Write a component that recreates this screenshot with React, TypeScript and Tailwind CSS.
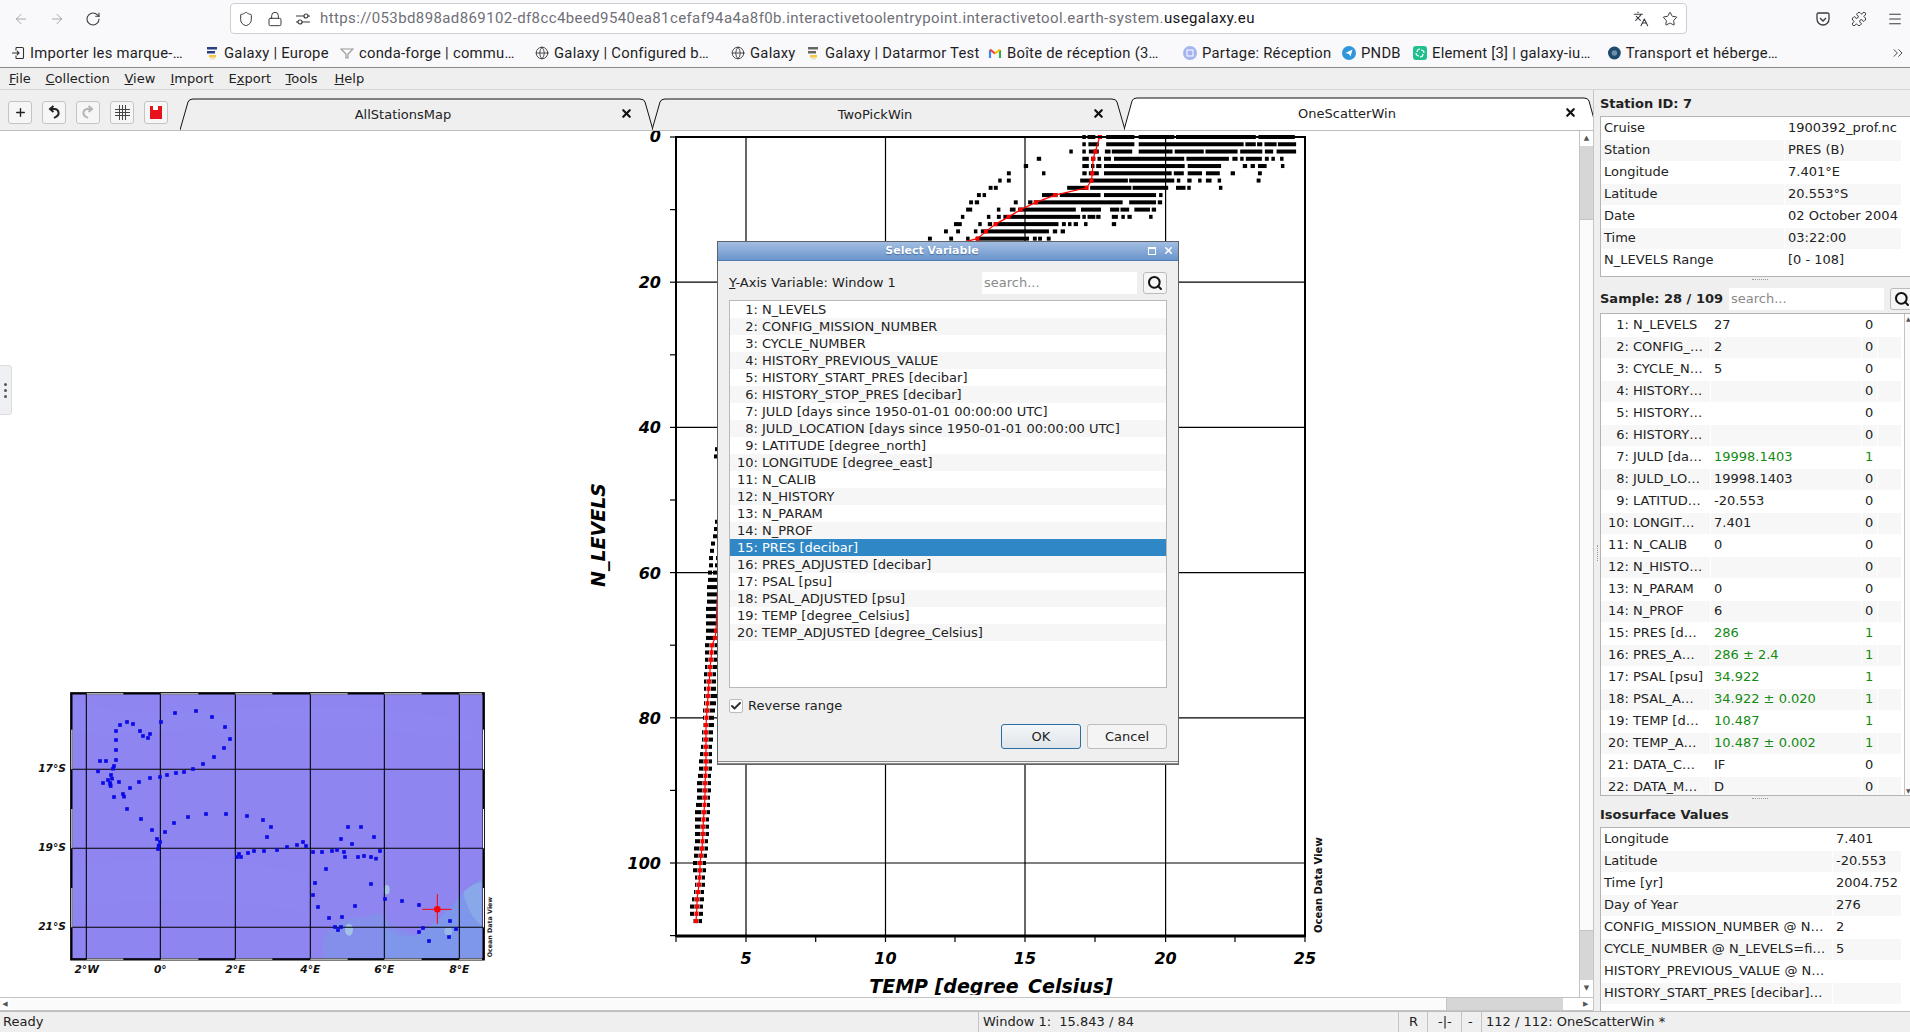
import {
  ArrowLeft,
  ArrowRight,
  RotateCw,
  Shield,
  Lock,
  Languages,
  Star,
  Puzzle,
  Menu,
  ChevronsRight,
  Globe,
  Search,
  Plus,
  X,
  Check,
} from "lucide-react"

const QT = "font-['DejaVu_Sans',sans-serif]"
const URL_TEXT = "https://053bd898ad869102-df8cc4beed9540ea81cefaf94a4a8f0b.interactivetoolentrypoint.interactivetool.earth-system."

function Tune() {
  return (
    <svg width="16" height="16" viewBox="0 0 16 16" fill="none" stroke="#3a3a40" strokeWidth="1.2">
      <path d="M1 5h8M13 5h2M1 11h2M7 11h8" />
      <circle cx="11" cy="5" r="2" />
      <circle cx="5" cy="11" r="2" />
    </svg>
  )
}

function ImportIcon() {
  return (
    <svg width="14" height="14" viewBox="0 0 14 14" fill="none" stroke="#333" strokeWidth="1.1">
      <path d="M5 1.5h6.5a1 1 0 0 1 1 1v9a1 1 0 0 1-1 1H5M5 1.5v3M5 12.5v-3M1 7h7M6 5l2 2-2 2" />
    </svg>
  )
}

function GalaxyIcon({ top = "#2c3e85", low = "#f5c542" }: { top?: string; low?: string }) {
  return (
    <svg width="14" height="14" viewBox="0 0 14 14">
      <rect x="2" y="1" width="10" height="2.5" fill={top} />
      <rect x="2" y="5" width="8" height="2.5" fill={top} />
      <rect x="4" y="9" width="7" height="2.5" fill={low} />
      <rect x="5" y="12" width="5" height="1.5" fill="#e6e6c0" />
    </svg>
  )
}

function CondaIcon() {
  return (
    <svg width="14" height="14" viewBox="0 0 14 14" fill="none" stroke="#9a9a9a" strokeWidth="1.2">
      <path d="M1 3h12L8 8v4H6V8z" />
    </svg>
  )
}

function GmailIcon() {
  return (
    <svg width="14" height="14" viewBox="0 0 14 14" fill="none" strokeWidth="2.2">
      <path d="M2 12V4" stroke="#4285f4" />
      <path d="M12 12V4" stroke="#34a853" />
      <path d="M2 3.5L7 7.5" stroke="#ea4335" />
      <path d="M7 7.5L12 3.5" stroke="#fbbc04" />
    </svg>
  )
}

function PartageIcon() {
  return (
    <svg width="14" height="14" viewBox="0 0 14 14">
      <circle cx="7" cy="7" r="7" fill="#a3b4ee" />
      <rect x="4" y="4" width="6" height="6" fill="none" stroke="#fff" strokeWidth="1" />
    </svg>
  )
}

function PndbIcon() {
  return (
    <svg width="14" height="14" viewBox="0 0 14 14">
      <circle cx="7" cy="7" r="7" fill="#2f96dc" />
      <path d="M3.5 7L10.5 3.5 8.5 10.5 7 8z" fill="#fff" />
    </svg>
  )
}

function ElementIcon() {
  return (
    <svg width="14" height="14" viewBox="0 0 14 14">
      <rect width="14" height="14" rx="3" fill="#1fbf8f" />
      <path d="M4 6a3 3 0 0 1 3-3M10 8a3 3 0 0 1-3 3M8 4a3 3 0 0 1 3 3M6 10a3 3 0 0 1-3-3" stroke="#fff" strokeWidth="1.2" fill="none" />
    </svg>
  )
}

function TransportIcon() {
  return (
    <svg width="14" height="14" viewBox="0 0 14 14">
      <circle cx="7" cy="7" r="7" fill="#1e4a6e" />
      <circle cx="7" cy="7" r="3" fill="#6e8fa8" />
    </svg>
  )
}

const bookmarks = [
  { w: "w-[194px]", icon: <ImportIcon />, label: "Importer les marque-…" },
  { w: "w-[135px]", icon: <GalaxyIcon />, label: "Galaxy | Europe" },
  { w: "w-[195px]", icon: <CondaIcon />, label: "conda-forge | commu…" },
  { w: "w-[196px]", icon: <Globe size={14} strokeWidth={1.3} />, label: "Galaxy | Configured b…" },
  { w: "w-[75px]", icon: <Globe size={14} strokeWidth={1.3} />, label: "Galaxy" },
  { w: "w-[182px]", icon: <GalaxyIcon top="#666" />, label: "Galaxy | Datarmor Test" },
  { w: "w-[195px]", icon: <GmailIcon />, label: "Boîte de réception (3…" },
  { w: "w-[159px]", icon: <PartageIcon />, label: "Partage: Réception" },
  { w: "w-[71px]", icon: <PndbIcon />, label: "PNDB" },
  { w: "w-[195px]", icon: <ElementIcon />, label: "Element [3] | galaxy-iu…" },
  { w: "w-[170px]", icon: <TransportIcon />, label: "Transport et héberge…" },
]

function BrowserChrome() {
  return (
    <div className="font-['Roboto',sans-serif] text-[#1f1e24] border-b border-[#8a8a8a] bg-[#f9f9fb]">
      <div className="h-[38px] flex items-center relative">
        <div className="w-[230px] flex items-center shrink-0 pl-[13px] gap-[20px]">
          <ArrowLeft size={16} strokeWidth={1.5} className="text-[#a8a8ac]" />
          <ArrowRight size={16} strokeWidth={1.5} className="text-[#a8a8ac]" />
          <RotateCw size={16} strokeWidth={1.6} className="text-[#3a3a40]" />
        </div>
        <div className="w-[1457px] h-[31px] mt-[-1px] bg-white border border-[#cfcfd3] rounded-[4px] flex items-center pl-[6px]">
          <Shield size={16} strokeWidth={1.5} className="ml-[1px] text-[#3a3a40]" />
          <Lock size={16} strokeWidth={1.5} className="ml-[13px] text-[#3a3a40]" />
          <span className="ml-[12px]"><Tune /></span>
          <span className="ml-[9px] text-[15px] tracking-[0.39px] whitespace-nowrap text-[#6f6f78]">
            {URL_TEXT}
            <span className="text-[#15141a]">usegalaxy.eu</span>
          </span>
          <span className="flex-1" />
          <Languages size={16} strokeWidth={1.6} className="ml-[-40px] text-[#3a3a40]" />
          <Star size={16} strokeWidth={1.5} className="ml-[13px] mr-[8px] text-[#3a3a40]" />
        </div>
        <div className="flex items-center ml-[128px] gap-[20px] text-[#3a3a40]">
          <svg width="16" height="16" viewBox="0 0 16 16" fill="none" stroke="currentColor" strokeWidth="1.3">
            <path d="M2 3.5a1.5 1.5 0 0 1 1.5-1.5h9A1.5 1.5 0 0 1 14 3.5V8a6 6 0 0 1-12 0zM5 7l3 3 3-3" />
          </svg>
          <Puzzle size={16} strokeWidth={1.5} />
          <Menu size={16} strokeWidth={1.6} />
        </div>
      </div>
      <div className="h-[29px] flex items-center pl-[11px] pt-px text-[14.8px] tracking-[0.25px] whitespace-nowrap">
        {bookmarks.map((b) => (
          <div key={b.label} className={`${b.w} shrink-0 flex items-center gap-[5px]`}>
            {b.icon}
            <span>{b.label}</span>
          </div>
        ))}
        <ChevronsRight size={16} strokeWidth={1.2} className="ml-[112px]" />
      </div>
    </div>
  )
}

function AppMenu() {
  const items = [
    { pre: "", u: "F", post: "ile", w: "w-[36.5px]" },
    { pre: "", u: "C", post: "ollection", w: "w-[79px]" },
    { pre: "", u: "V", post: "iew", w: "w-[46px]" },
    { pre: "", u: "I", post: "mport", w: "w-[58px]" },
    { pre: "E", u: "x", post: "port", w: "w-[57px]" },
    { pre: "", u: "T", post: "ools", w: "w-[49px]" },
    { pre: "", u: "H", post: "elp", w: "w-[40px]" },
  ]
  return (
    <div className="h-[22px] flex items-center pl-[9px] pt-px bg-[#efefef] border-b border-[#d4d4d4] text-[13px] text-[#222]">
      {items.map((m) => (
        <span key={m.post} className={`${m.w} shrink-0`}>
          {m.pre}
          <u>{m.u}</u>
          {m.post}
        </span>
      ))}
    </div>
  )
}

function ToolButton({ children }: { children: React.ReactNode }) {
  return (
    <div className="w-[24px] h-[23px] bg-[#f6f6f6] border border-[#c4c4c4] rounded-[3px] flex items-center justify-center">
      {children}
    </div>
  )
}

function UndoGlyph({ color, flip }: { color: string; flip?: boolean }) {
  return (
    <svg width="14" height="15" viewBox="0 0 14 15" fill="none" stroke={color} strokeWidth="2" className={flip ? "-scale-x-100" : ""}>
      <path d="M4 4h3.5a4 4 0 0 1 2 7.5L7 13" />
      <path d="M6.5 1L3 4l3.5 3" />
    </svg>
  )
}

function TabShape({ active }: { active?: boolean }) {
  return (
    <svg className="absolute inset-0" width="474" height="34" viewBox="0 0 474 34">
      <path
        d={active ? "M0 33 L8 4 Q9 1 13 1 L460 1 Q464 1 465 4 L473 33" : "M0 33 L8 5 Q9 2 13 2 L460 2 Q464 2 465 5 L473 33"}
        fill={active ? "#fff" : "#efefef"}
        stroke="#111"
        strokeWidth="1"
      />
    </svg>
  )
}

function Tab({ label, active }: { label: string; active?: boolean }) {
  return (
    <div className="relative w-[472px] h-[34px] shrink-0">
      <TabShape active={active} />
      <span className={`absolute left-0 right-[26px] text-center text-[13px] text-[#222] ${active ? "top-[7px]" : "top-[8px]"}`}>{label}</span>
      <X size={13} strokeWidth={4} className={`absolute right-[19px] text-[#111] ${active ? "top-[9px]" : "top-[10px]"}`} />
    </div>
  )
}

function TabBar() {
  return (
    <div className="h-[41px] bg-[#efefef] border-b border-[#bdbdbd] flex items-start pt-[7px] pl-[8px]">
      <div className="flex gap-[10px] mt-[4px]">
        <ToolButton>
          <Plus size={13} strokeWidth={2.6} className="text-[#222]" />
        </ToolButton>
        <ToolButton>
          <UndoGlyph color="#222" />
        </ToolButton>
        <ToolButton>
          <UndoGlyph color="#b5b5b5" flip />
        </ToolButton>
        <ToolButton>
          <svg width="15" height="15" viewBox="0 0 15 15" stroke="#444" strokeWidth="1">
            <path d="M4.5 0v15M7.5 0v15M10.5 0v15M0 4.5h15M0 7.5h15M0 10.5h15" />
          </svg>
        </ToolButton>
        <ToolButton>
          <svg width="14" height="15" viewBox="0 0 14 15">
            <path d="M1 1h12v13H1z" fill="#e8121c" />
            <rect x="4" y="1" width="5" height="4" fill="#fff" />
          </svg>
        </ToolButton>
      </div>
      <div className="flex ml-[12px]">
        <Tab label="AllStationsMap" />
        <Tab label="TwoPickWin" />
        <Tab label="OneScatterWin" active />
      </div>
    </div>
  )
}

const dots = [
  [375, 102], [438, 96], [486, 114], [525, 144], [540, 180], [522, 207], [492, 234], [459, 255], [429, 270], [402, 279], [378, 282], [351, 288], [330, 294], [300, 297], [267, 309], [240, 327], [222, 353], [219, 345], [192, 354], [207, 309], [183, 288], [186, 299], [174, 303], [159, 312], [180, 312], [182, 321], [181, 316], [144, 277], [150, 246], [168, 246], [198, 243], [192, 261], [189, 269], [198, 213], [198, 183], [198, 156], [210, 138], [231, 129], [249, 135], [270, 156], [279, 171], [294, 177], [300, 165], [333, 129],
  [231, 390], [273, 420], [306, 453], [321, 480], [330, 489], [326, 500], [324, 510], [345, 459], [372, 432], [414, 414], [468, 405], [528, 405], [591, 411], [639, 423], [663, 444], [651, 474],
  [561, 534], [567, 525], [573, 534], [594, 522], [612, 516], [642, 516], [681, 513], [711, 504], [741, 498], [759, 489], [768, 501], [789, 519], [816, 519], [846, 516], [861, 513], [882, 519], [885, 534], [873, 480], [894, 444], [906, 495], [933, 444], [972, 474], [990, 516], [978, 539], [963, 534], [942, 531], [924, 534],
  [828, 570], [795, 612], [789, 648], [804, 684], [837, 717], [855, 744], [864, 753], [873, 744], [876, 714], [915, 681], [963, 615], [1005, 660], [1056, 666], [1107, 678], [1200, 726], [1218, 750], [1197, 774], [1137, 786], [1107, 759], [1119, 747],
]

function StationMap() {
  const grid = [109, 331, 556, 781, 1003, 1228]
  const whiteTop = [[110, 110], [332, 113], [556, 111], [781, 112], [1003, 112], [1228, 68]]
  const whiteSide = [[152, 119], [390, 118], [627, 118]]
  const xLabels = [[110, "2°W"], [331, "0°"], [556, "2°E"], [781, "4°E"], [1003, "6°E"], [1228, "8°E"]] as const
  const yLabels = [[271, "17°S"], [508, "19°S"], [745, "21°S"]] as const
  return (
    <svg width="460" height="300" viewBox="0 0 1380 900" className="shrink-0 mt-[548px] ml-[50px]" fontFamily="DejaVu Sans" overflow="visible">
      <rect x="62" y="42" width="1241" height="801" fill="#8f85f1" />
      <path d="M70 60q150 60 500 30t700 40v60q-400-70-800-40T70 150z" fill="#8e86f1" />
      <path d="M70 560q300-40 700 20v120q-300-60-700-20z" fill="#8e87f1" />
      <path d="M820 843V775q50-70 130-60 50-30 70 25l80 30q80-50 140-130l55-40v243z" fill="#848fec" />
      <path d="M1000 843V740q40 40 100 30 80-50 140-130l55-40v243z" fill="#7f97ea" />
      <path d="M1240 640q30-30 55-30v130q-40-30-55-100z" fill="#89a8ea" />
      <ellipse cx="897" cy="752" rx="12" ry="18" fill="#a3c2e6" />
      <ellipse cx="1010" cy="632" rx="9" ry="14" fill="#a3c2e6" />
      <ellipse cx="1195" cy="757" rx="12" ry="12" fill="#98b9e8" />
      {grid.map((x) => (
        <line key={x} x1={x} y1="42" x2={x} y2="843" stroke="#000" strokeWidth="3.2" />
      ))}
      {[271, 508, 745].map((y) => (
        <line key={y} x1="62" y1={y} x2="1303" y2={y} stroke="#000" strokeWidth="3.2" />
      ))}
      <rect x="62" y="41" width="1241" height="802" fill="none" stroke="#000" strokeWidth="3" />
      <rect x="65" y="44" width="1235" height="796" fill="none" stroke="#000" strokeWidth="5" />
      {whiteTop.map(([x, w]) => (
        <g key={x} fill="#fff">
          <rect x={x} y="43" width={w} height="3" />
          <rect x={x} y="839" width={w} height="3" />
        </g>
      ))}
      {whiteSide.map(([y, h]) => (
        <g key={y} fill="#fff">
          <rect x="64" y={y} width="3" height={h} />
          <rect x="1299" y={y} width="3" height={h} />
        </g>
      ))}
      {dots.map(([x, y], i) => (
        <rect key={i} x={x - 5.5} y={y - 5.5} width="11" height="11" fill="#0a0ae8" />
      ))}
      <path d="M1117 691h88M1162 645v90" stroke="#f00" strokeWidth="3" />
      <circle cx="1162" cy="691" r="10" fill="#f00" />
      {xLabels.map(([x, t]) => (
        <text key={t} x={x} y="881" textAnchor="middle" fontSize="32" fontWeight="700" fontStyle="italic" fill="#111">
          {t}
        </text>
      ))}
      {yLabels.map(([y, t]) => (
        <text key={t} x="48" y={y + 8} textAnchor="end" fontSize="32" fontWeight="700" fontStyle="italic" fill="#111">
          {t}
        </text>
      ))}
      <text transform="translate(1325 835) rotate(-90)" fontSize="19" fontWeight="700" fill="#222">
        Ocean Data View
      </text>
    </svg>
  )
}

// top rows of the scatter, x in zoomed units, converted in zx()
const topRows: [number, number[][]][] = [
  [0, [[1020, 1028], [1032, 1050], [1057, 1065], [1075, 1140], [1150, 1232], [1236, 1420], [1426, 1510]]],
  [1, [[1020, 1028], [1034, 1058], [1075, 1140], [1150, 1392], [1396, 1420], [1423, 1435], [1440, 1468], [1471, 1513]]],
  [2, [[990, 998], [1020, 1028], [1035, 1058], [1072, 1085], [1088, 1135], [1150, 1228], [1233, 1300], [1304, 1378], [1384, 1435], [1441, 1460], [1468, 1513]]],
  [3, [[915, 925], [1020, 1035], [1040, 1050], [1055, 1063], [1070, 1086], [1093, 1255], [1260, 1358], [1366, 1378], [1384, 1392], [1397, 1434], [1441, 1450], [1456, 1464], [1476, 1484]]],
  [4, [[885, 895], [1020, 1035], [1040, 1048], [1052, 1064], [1070, 1256], [1263, 1340], [1390, 1400], [1408, 1418], [1425, 1445], [1478, 1486]]],
  [5, [[846, 855], [927, 935], [1020, 1030], [1035, 1058], [1070, 1226], [1231, 1254], [1263, 1296], [1305, 1337], [1362, 1372], [1425, 1434]]],
  [6, [[826, 834], [846, 855], [1015, 1125], [1128, 1232], [1238, 1246], [1262, 1272], [1287, 1295], [1305, 1318], [1332, 1340], [1422, 1431]]],
  [7, [[804, 813], [816, 825], [985, 1033], [1038, 1133], [1136, 1218], [1236, 1258], [1262, 1270], [1335, 1343]]],
  [8, [[777, 786], [790, 798], [927, 963], [968, 1062], [1070, 1190], [1197, 1205]]],
  [9, [[759, 768], [772, 782], [862, 871], [895, 905], [908, 1113], [1128, 1190], [1194, 1204]]],
  [10, [[752, 766], [823, 831], [853, 866], [872, 1005], [1017, 1063], [1084, 1105], [1108, 1128], [1140, 1176], [1180, 1190]]],
  [11, [[740, 748], [800, 808], [823, 832], [838, 1015], [1020, 1028], [1032, 1050], [1052, 1062], [1088, 1102], [1110, 1118], [1124, 1134], [1174, 1182]]],
  [12, [[724, 742], [780, 788], [802, 812], [816, 965], [973, 982], [987, 995], [1000, 1010], [1024, 1032], [1088, 1098]]],
  [13, [[701, 710], [729, 738], [770, 778], [786, 943], [952, 962], [970, 980]]],
  [14, [[664, 673], [713, 722], [752, 760], [775, 897], [906, 915], [918, 927], [938, 947]]],
]

const topRed = [[1060, 0], [1050, 2], [1045, 3], [1043, 5], [1041, 6], [1030, 7], [957, 8], [913, 9], [878, 10], [850, 11], [820, 12], [798, 13], [778, 14]]

// lower profile rows, real x
const lowRows: [number, number, number, number][] = [
  [61, 708, 717, 0], [62, 707, 717, 0], [63, 707, 717, 0], [64, 707, 717, 0], [65, 706, 717, 0], [66, 706, 717, 0], [67, 706, 717, 0], [68, 706, 717, 716],
  [69, 706, 715, 715], [70, 705, 717, 712], [71, 705, 717, 711.5], [72, 705, 717, 711], [73, 705, 717, 710], [74, 704, 716, 710], [75, 704, 716, 709], [76, 704, 716, 708.5], [77, 704, 717, 708], [78, 704, 716, 707.5], [79, 703, 715, 707], [80, 703, 714, 706.5], [81, 703, 714, 706], [82, 702, 713, 706], [83, 702, 713, 706], [84, 701, 712, 706], [85, 700, 712, 706],
  [86, 699, 712, 706], [87, 699, 712, 706], [88, 698, 711, 705.5], [89, 697, 711, 705], [90, 697, 711, 705], [91, 697, 710, 705], [92, 696, 710, 704.5], [93, 695, 710, 704], [94, 695, 709, 703.5], [95, 695, 709, 703], [96, 695, 709, 703], [97, 695, 708, 702.5], [98, 694, 708, 702], [99, 694, 707, 701], [100, 693, 706, 700], [101, 693, 706, 700], [102, 695, 705, 699.5], [103, 695, 705, 699], [104, 694, 704, 698], [105, 692, 704, 697], [106, 690, 703, 697], [107, 690, 703, 696.5], [108, 693, 702, 696],
]
const sparseRows: [number, number, number][] = [
  [43, 715, 717], [44, 714, 717], [53, 715, 717], [54, 714, 717], [55, 713, 717], [56, 711, 715], [57, 710, 714], [58, 709, 713], [58, 716, 717], [59, 709, 713], [59, 715, 717], [60, 708, 712], [60, 713, 717],
]

const zx = (z: number) => 640 + z / 2.306
const ly = (l: number) => 137 + 7.26 * l

function ScatterPlot() {
  const xGrid = [746, 885.5, 1025, 1165.6]
  const yGrid = [20, 40, 60, 80, 100]
  const xTicks = [746, 815.7, 885.5, 955, 1025, 1095, 1165.6, 1235, 1305, 676]
  const redPoints = topRed.map(([z, l]) => `${zx(z)},${ly(l)}`).join(" ") + " 728,300 " + lowRows.filter((r) => r[3]).map((r) => `${r[3]},${ly(r[0])}`).join(" ")
  return (
    <svg width="750" height="864" viewBox="580 131 750 864" className="shrink-0 ml-[70px]" fontFamily="DejaVu Sans">
      {xGrid.map((x) => (
        <line key={x} x1={x} y1="137" x2={x} y2="936" stroke="#000" strokeWidth="1.2" />
      ))}
      {yGrid.map((l) => (
        <line key={l} x1="676" y1={ly(l)} x2="1305" y2={ly(l)} stroke="#000" strokeWidth="1.2" />
      ))}
      {topRows.map(([l, segs]) =>
        segs.map(([a, b]) => <rect key={`${l}-${a}`} x={zx(a)} y={ly(l) - 2} width={zx(b) - zx(a)} height="4" fill="#000" />),
      )}
      {sparseRows.map(([l, a, b], i) => (
        <rect key={i} x={a} y={ly(l) - 2} width={b - a} height="4" fill="#000" />
      ))}
      {lowRows.map(([l, a, b]) => (
        <rect key={l} x={a} y={ly(l) - 2} width={b - a} height="4" fill="#000" />
      ))}
      {lowRows
        .filter((r) => r[0] >= 70)
        .map((r) => (
          <rect key={r[0]} x={r[3] - 2.5} y={ly(r[0]) - 2} width="5" height="4" fill="#fff" />
        ))}
      <polyline points={redPoints} fill="none" stroke="#f00" strokeWidth="1.2" />
      {topRed.map(([z, l]) => (
        <rect key={l} x={zx(z) - 2} y={ly(l) - 2} width="4" height="4" fill="#f00" />
      ))}
      {lowRows
        .filter((r) => r[3])
        .map((r) => (
          <rect key={r[0]} x={r[3] - 2} y={ly(r[0]) - 2} width="4" height="4" fill="#f00" />
        ))}
      <rect x="676" y="137" width="629" height="799" fill="none" stroke="#000" strokeWidth="2" />
      <line x1="676" y1="936" x2="1305" y2="936" stroke="#000" strokeWidth="3" />
      {[0, 10, 20, 30, 40, 50, 60, 70, 80, 90, 100, 110].map((l) => (
        <line key={l} x1="670" y1={ly(l)} x2="676" y2={ly(l)} stroke="#000" strokeWidth="1.2" />
      ))}
      {xTicks.map((x) => (
        <line key={x} x1={x} y1="936" x2={x} y2="942" stroke="#000" strokeWidth="1.2" />
      ))}
      {[0, 20, 40, 60, 80, 100].map((l) => (
        <text key={l} x="661" y={l === 0 ? 142 : ly(l) + 6} textAnchor="end" fontSize="16" fontWeight="700" fontStyle="italic" fill="#000">
          {l}
        </text>
      ))}
      {[[746, "5"], [885.5, "10"], [1025, "15"], [1165.6, "20"], [1305, "25"]].map(([x, t]) => (
        <text key={t} x={x} y="964" textAnchor="middle" fontSize="16" fontWeight="700" fontStyle="italic" fill="#000">
          {t}
        </text>
      ))}
      <text x="991" y="993" textAnchor="middle" fontSize="19" fontWeight="700" fontStyle="italic" fill="#000">
        TEMP [degree_Celsius]
      </text>
      <text transform="translate(605 535) rotate(-90)" textAnchor="middle" fontSize="19" fontWeight="700" fontStyle="italic" fill="#000">
        N_LEVELS
      </text>
      <text transform="translate(1322 933) rotate(-90)" fontSize="10" fontWeight="700" fill="#111">
        Ocean Data View
      </text>
    </svg>
  )
}

const dialogVars = [
  "N_LEVELS",
  "CONFIG_MISSION_NUMBER",
  "CYCLE_NUMBER",
  "HISTORY_PREVIOUS_VALUE",
  "HISTORY_START_PRES [decibar]",
  "HISTORY_STOP_PRES [decibar]",
  "JULD [days since 1950-01-01 00:00:00 UTC]",
  "JULD_LOCATION [days since 1950-01-01 00:00:00 UTC]",
  "LATITUDE [degree_north]",
  "LONGITUDE [degree_east]",
  "N_CALIB",
  "N_HISTORY",
  "N_PARAM",
  "N_PROF",
  "PRES [decibar]",
  "PRES_ADJUSTED [decibar]",
  "PSAL [psu]",
  "PSAL_ADJUSTED [psu]",
  "TEMP [degree_Celsius]",
  "TEMP_ADJUSTED [degree_Celsius]",
]

function SelectVariableDialog() {
  return (
    <div className="absolute left-[717px] top-[110px] w-[462px] h-[524px] bg-[#efefef] border border-[#5f6368] flex flex-col">
      <div className="h-[19px] shrink-0 bg-gradient-to-b from-[#a3bee3] to-[#6a95cb] border-b border-[#4f7cb3] relative flex items-center justify-center pr-[32px]">
        <span className="text-[11px] font-bold text-white [text-shadow:0_1px_1px_#4a6f9f]">Select Variable</span>
        <span className="absolute left-[430px] top-[5px] w-[8px] h-[8px] border border-white border-t-2" />
        <X size={11} strokeWidth={3.4} className="absolute right-[4px] top-[3px] text-white" />
      </div>
      <div className="flex items-center h-[39px] pl-[11px] pt-[5px]">
        <span className="text-[13px] text-[#222] w-[253px]">
          <u>Y</u>-Axis Variable: Window 1
        </span>
        <div className="w-[155px] h-[22px] bg-white text-[13px] text-[#8a8a8a] pl-[2px] leading-[22px]">search...</div>
        <div className="ml-[6px] w-[24px] h-[22px] bg-[#f6f6f6] border border-[#bcbcbc] rounded-[3px] flex items-center justify-center">
          <Search size={16} strokeWidth={3} className="text-[#111]" />
        </div>
      </div>
      <div className="ml-[11px] w-[438px] h-[389px] bg-white border border-[#b9b9b9]">
        {dialogVars.map((v, i) => (
          <div
            key={v}
            className={`h-[17px] flex items-center text-[13px] ${i === 14 ? "bg-[#2f88c5] text-white" : i % 2 === 1 ? "bg-[#f6f6f6] text-[#222]" : "text-[#222]"}`}
          >
            <span className="w-[28px] text-right shrink-0">{i + 1}:</span>
            <span className="ml-[4px] whitespace-nowrap">{v}</span>
          </div>
        ))}
      </div>
      <div className="flex items-center h-[18px] mt-[9px] ml-[11px] text-[13px] text-[#222]">
        <span className="w-[14px] h-[14px] bg-white border border-[#bdbdbd] rounded-[2px] flex items-center justify-center">
          <Check size={12} strokeWidth={4} className="text-[#333]" />
        </span>
        <span className="ml-[5px]">Reverse range</span>
      </div>
      <div className="flex justify-end gap-[6px] pr-[11px] mt-[9px] text-[13px] text-[#222]">
        <div className="w-[80px] h-[25px] rounded-[3px] border border-[#2b6ea3] bg-gradient-to-b from-[#f4f6f8] to-[#dfe5ea] flex items-center justify-center">OK</div>
        <div className="w-[80px] h-[25px] rounded-[3px] border border-[#bdbdbd] bg-[#f4f4f4] flex items-center justify-center">Cancel</div>
      </div>
      <div className="mt-[12px] mx-0 h-[3px] border-y border-[#8a8a8a] bg-[#f4f4f4]" />
    </div>
  )
}

function Canvas() {
  return (
    <div className={`flex-1 relative flex items-start bg-white overflow-hidden ${QT}`}>
      <StationMap />
      <ScatterPlot />
      <SelectVariableDialog />
      <div className="absolute left-0 top-[234px] w-[12px] h-[50px] bg-[#eef0f3] rounded-r-[4px] border border-l-0 border-[#dcdcdc] flex flex-col items-center justify-center gap-[3px]">
        <span className="w-[3px] h-[3px] rounded-full bg-[#555]" />
        <span className="w-[3px] h-[3px] rounded-full bg-[#555]" />
        <span className="w-[3px] h-[3px] rounded-full bg-[#555]" />
      </div>
    </div>
  )
}

function VScroll() {
  return (
    <div className="w-[14px] shrink-0 bg-[#d6d6d6] border-l border-[#c4c4c4] flex flex-col items-center">
      <div className="h-[15px] w-full bg-white flex items-center justify-center text-[7px] text-[#555]">▲</div>
      <div className="h-[73px] w-full" />
      <div className="flex-1 w-full bg-[#fbfbfb] border-y border-[#c4c4c4]" />
      <div className="h-[49px] w-full" />
      <div className="h-[17px] w-full bg-white flex items-center justify-center text-[7px] text-[#555]">▼</div>
    </div>
  )
}

function HScroll() {
  return (
    <div className="h-[14px] shrink-0 flex bg-[#d6d6d6] border-y border-[#c4c4c4]">
      <div className="w-[10px] bg-white flex items-center justify-center text-[7px] text-[#555]">◀</div>
      <div className="w-[1437px] bg-[#fbfbfb] border-r border-[#c4c4c4]" />
      <div className="flex-1" />
      <div className="w-[30px] bg-white flex items-center justify-start pl-[20px] text-[7px] text-[#555]">▶</div>
    </div>
  )
}

const stationInfo = [
  ["Cruise", "1900392_prof.nc"],
  ["Station", "PRES (B)"],
  ["Longitude", "7.401°E"],
  ["Latitude", "20.553°S"],
  ["Date", "02 October 2004"],
  ["Time", "03:22:00"],
  ["N_LEVELS Range", "[0 - 108]"],
]

const samples: [string, string, string, boolean?][] = [
  ["N_LEVELS", "27", "0"],
  ["CONFIG_…", "2", "0"],
  ["CYCLE_N…", "5", "0"],
  ["HISTORY…", "", "0"],
  ["HISTORY…", "", "0"],
  ["HISTORY…", "", "0"],
  ["JULD [da…", "19998.1403", "1", true],
  ["JULD_LO…", "19998.1403", "0"],
  ["LATITUD…", "-20.553", "0"],
  ["LONGIT…", "7.401", "0"],
  ["N_CALIB", "0", "0"],
  ["N_HISTO…", "", "0"],
  ["N_PARAM", "0", "0"],
  ["N_PROF", "6", "0"],
  ["PRES [d…", "286", "1", true],
  ["PRES_A…", "286 ± 2.4", "1", true],
  ["PSAL [psu]", "34.922", "1", true],
  ["PSAL_A…", "34.922 ± 0.020", "1", true],
  ["TEMP [d…", "10.487", "1", true],
  ["TEMP_A…", "10.487 ± 0.002", "1", true],
  ["DATA_C…", "IF", "0"],
  ["DATA_M…", "D", "0"],
]

const isoValues = [
  ["Longitude", "7.401"],
  ["Latitude", "-20.553"],
  ["Time [yr]", "2004.752"],
  ["Day of Year", "276"],
  ["CONFIG_MISSION_NUMBER @ N…", "2"],
  ["CYCLE_NUMBER @ N_LEVELS=fi…", "5"],
  ["HISTORY_PREVIOUS_VALUE @ N…", ""],
  ["HISTORY_START_PRES [decibar]…", ""],
]

function KeyValueRows({ rows, keyW, valW }: { rows: string[][]; keyW: string; valW: string }) {
  return (
    <>
      {rows.map(([k, v], i) => (
        <div key={k} className="h-[22px] flex items-center">
          <div className={`${keyW} h-[21px] pl-[3px] flex items-center whitespace-nowrap ${i % 2 ? "bg-[#f7f7f7]" : ""}`}>{k}</div>
          <div className={`${valW} h-[21px] ml-px pl-[3px] flex items-center whitespace-nowrap ${i % 2 ? "bg-[#f7f7f7]" : ""}`}>{v}</div>
        </div>
      ))}
    </>
  )
}

function RightPanel() {
  return (
    <div className="w-[317px] shrink-0 border-l border-[#c4c4c4] bg-[#efefef] overflow-hidden pl-[6px] text-[13px] text-[#222] relative">
      <div className="h-[26px] flex items-center font-bold pt-[2px]">Station ID: 7</div>
      <div className="w-[330px] h-[161px] bg-white border border-[#b4b4b4]">
        <KeyValueRows rows={stationInfo} keyW="w-[183px]" valW="w-[116px]" />
      </div>
      <div className="flex items-center h-[37px] pt-[6px]">
        <span className="font-bold w-[129px] shrink-0">Sample: 28 / 109</span>
        <div className="w-[155px] h-[22px] bg-white text-[#8a8a8a] pl-[2px] leading-[22px] shrink-0">search...</div>
        <div className="ml-[6px] w-[28px] h-[22px] bg-[#f6f6f6] border border-[#bcbcbc] rounded-[3px] flex items-center pl-[3px] shrink-0">
          <Search size={16} strokeWidth={3} className="text-[#111]" />
        </div>
      </div>
      <div className="w-[330px] h-[483px] mt-[-1px] bg-white border border-[#b4b4b4] overflow-hidden flex">
        <div className="w-[301px] shrink-0">
          {samples.map(([name, val, flag, green], i) => {
            const alt = i % 2 ? "bg-[#f7f7f7]" : ""
            const color = green ? "text-[#138a13]" : ""
            return (
              <div key={i} className="h-[22px] flex items-center">
                <div className={`w-[109px] h-[21px] flex items-center whitespace-nowrap ${alt}`}>
                  <span className="w-[28px] text-right shrink-0">{i + 1}:</span>
                  <span className="ml-[4px]">{name}</span>
                </div>
                <div className={`w-[150px] h-[21px] ml-px pl-[3px] flex items-center whitespace-nowrap ${alt} ${color}`}>{val}</div>
                <div className={`w-[15px] h-[21px] ml-px pl-[3px] flex items-center ${alt} ${color}`}>{flag}</div>
                <div className={`w-[23px] h-[21px] ml-px ${alt}`} />
              </div>
            )
          })}
        </div>
        <div className="w-[8px] ml-[2px] border-l border-[#c4c4c4] bg-[#fbfbfb] flex flex-col justify-between items-start text-[6px] text-[#555] pl-px">
          <span>▲</span>
          <span>▼</span>
        </div>
      </div>
      <div className="h-[31px] flex items-center font-bold pt-[6px]">Isosurface Values</div>
      <div className="w-[330px] h-[185px] bg-white border border-[#b4b4b4]">
        <KeyValueRows rows={isoValues} keyW="w-[231px]" valW="w-[68px]" />
      </div>
      <div className="absolute left-[158px] top-[189px] w-[16px] border-t border-dotted border-[#9a9a9a]" />
      <div className="absolute left-[158px] top-[708px] w-[16px] border-t border-dotted border-[#9a9a9a]" />
      <div className="absolute left-[3px] top-[455px] h-[16px] border-l border-dotted border-[#9a9a9a]" />
    </div>
  )
}

function StatusBar() {
  const cell = "h-full flex items-center pl-[4px] border-l border-[#c4c4c4] shrink-0 whitespace-nowrap"
  return (
    <div className={`h-[21px] flex bg-[#efefef] border-t border-[#bdbdbd] text-[13px] text-[#222] ${QT}`}>
      <div className="w-[978px] flex items-center pl-[3px] shrink-0">Ready</div>
      <div className={`${cell} w-[420px]`}>Window 1:&nbsp; 15.843 / 84</div>
      <div className={`${cell} w-[29px] pl-[10px]`}>R</div>
      <div className={`${cell} w-[34px] pl-[10px]`}>-|-</div>
      <div className={`${cell} w-[20px] pl-[6px]`}>-</div>
      <div className={cell}>112 / 112: OneScatterWin *</div>
    </div>
  )
}

export default function App() {
  return (
    <div className="w-[1910px] h-[1032px] overflow-hidden flex flex-col bg-white">
      <BrowserChrome />
      <div className={QT}>
        <AppMenu />
      </div>
      <div className="flex-1 flex min-h-0">
        <div className={`w-[1593px] shrink-0 flex flex-col ${QT}`}>
          <TabBar />
          <div className="flex-1 flex min-h-0">
            <Canvas />
            <VScroll />
          </div>
          <HScroll />
        </div>
        <div className={`flex ${QT}`}>
          <RightPanel />
        </div>
      </div>
      <StatusBar />
    </div>
  )
}
